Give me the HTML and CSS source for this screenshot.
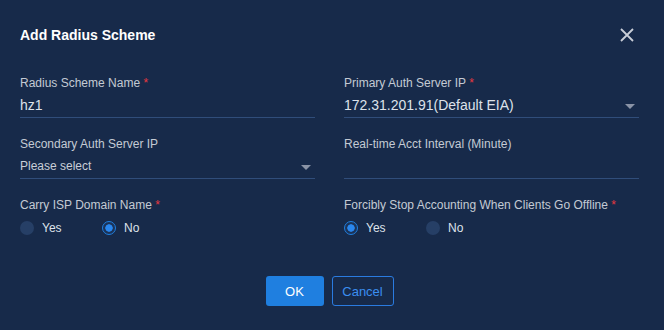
FILE: index.html
```html
<!DOCTYPE html>
<html lang="en">
<head>
    <meta charset="UTF-8">
    <meta name="viewport" content="width=device-width, initial-scale=1.0">
    <title>Add Radius Scheme</title>
    <link rel="stylesheet" href="styles.css">
</head>
<body>
    <div class="dialog">
        <div class="watermark" aria-hidden="true">
            <div class="wm-col wm-left">
                <div class="wm-block"><span>z11470</span><span>H3C</span></div>
                <div class="wm-block"><span>z11470</span><span>H3C</span></div>
                <div class="wm-block"><span>z11470</span><span>H3C</span></div>
                <div class="wm-block"><span>z11470</span><span>H3C</span></div>
                <div class="wm-block"><span>z11470</span><span>H3C</span></div>
                <div class="wm-block"><span>z11470</span><span>H3C</span></div>
            </div>
            <div class="wm-col wm-right">
                <div class="wm-block"><span>z11470</span><span>H3C</span></div>
                <div class="wm-block"><span>z11470</span><span>H3C</span></div>
                <div class="wm-block"><span>z11470</span><span>H3C</span></div>
                <div class="wm-block"><span>z11470</span><span>H3C</span></div>
                <div class="wm-block"><span>z11470</span><span>H3C</span></div>
                <div class="wm-block"><span>z11470</span><span>H3C</span></div>
            </div>
        </div>

        <div class="dialog-header">
            <h2>Add Radius Scheme</h2>
            <button type="button" class="close-btn" aria-label="Close">
                <svg width="14" height="14" viewBox="0 0 14 14">
                    <path d="M1 1 L13 13 M13 1 L1 13" stroke="#c9ced8" stroke-width="1.8" fill="none"/>
                </svg>
            </button>
        </div>

        <form class="scheme-form">
            <div class="form-grid">
                <div class="field">
                    <label>Radius Scheme Name <span class="req">*</span></label>
                    <div class="control">hz1</div>
                </div>
                <div class="field">
                    <label>Primary Auth Server IP <span class="req">*</span></label>
                    <div class="control select">172.31.201.91(Default EIA)<span class="caret"></span></div>
                </div>
                <div class="field">
                    <label>Secondary Auth Server IP</label>
                    <div class="control select placeholder">Please select<span class="caret"></span></div>
                </div>
                <div class="field">
                    <label>Real-time Acct Interval (Minute)</label>
                    <div class="control"></div>
                </div>
                <div class="field">
                    <label>Carry ISP Domain Name <span class="req">*</span></label>
                    <div class="radio-group">
                        <label class="radio"><input type="radio" name="isp"><span>Yes</span></label>
                        <label class="radio"><input type="radio" name="isp" checked><span>No</span></label>
                    </div>
                </div>
                <div class="field">
                    <label>Forcibly Stop Accounting When Clients Go Offline <span class="req">*</span></label>
                    <div class="radio-group">
                        <label class="radio"><input type="radio" name="stop" checked><span>Yes</span></label>
                        <label class="radio"><input type="radio" name="stop"><span>No</span></label>
                    </div>
                </div>
            </div>

            <div class="form-actions">
                <button type="submit" class="btn btn-primary">OK</button>
                <button type="button" class="btn btn-outline">Cancel</button>
            </div>
        </form>
    </div>
</body>
</html>
```

FILE: styles.css
```css
:root {
    --bg-color: #172a4a;
    --label-color: #c4cad4;
    --text-color: #dde2ea;
    --line-color: #304d7a;
    --blue: #1f7fe0;
    --required: #e8383f;
}

body {
    font-family: "Liberation Sans", Arial, sans-serif;
    margin: 0;
    padding: 0;
    background-color: var(--bg-color);
    min-height: 100vh;
}

.dialog {
    position: relative;
    padding: 25px 25px 0 20px;
    overflow: hidden;
    height: 330px;
    box-sizing: border-box;
}

/* faint user watermark behind the form */
.watermark {
    position: absolute;
    inset: 0;
    pointer-events: none;
}

.wm-col {
    position: absolute;
    top: -31px;
    display: flex;
    flex-direction: column;
}

.wm-left { left: 79px; }
.wm-right { left: 420px; }

.wm-block {
    display: flex;
    flex-direction: column;
    height: 62.5px;
    font-size: 18px;
    line-height: 21px;
    color: rgba(255, 255, 255, 0.018);
}

.dialog-header {
    position: relative;
    display: flex;
    align-items: center;
    justify-content: space-between;
    height: 20px;
    margin-bottom: 30px;
}

.dialog-header h2 {
    margin: 0;
    font-size: 14px;
    line-height: 20px;
    font-weight: bold;
    color: #fff;
}

.close-btn {
    background: none;
    border: none;
    padding: 0;
    margin-right: 5px;
    width: 14px;
    height: 14px;
    display: flex;
    cursor: pointer;
}

.scheme-form {
    position: relative;
}

.form-grid {
    display: grid;
    grid-template-columns: 295px 295px;
    column-gap: 29px;
    row-gap: 18px;
}

.field > label {
    display: block;
    font-size: 12px;
    line-height: 16px;
    color: var(--label-color);
    margin-bottom: 2px;
}

.req {
    color: var(--required);
}

.control {
    display: flex;
    align-items: center;
    justify-content: space-between;
    height: 24px;
    border-bottom: 1px solid var(--line-color);
    font-size: 14px;
    color: var(--text-color);
}

.control.placeholder {
    font-size: 12px;
    color: #c9ced8;
}

.caret {
    width: 0;
    height: 0;
    border-left: 5px solid transparent;
    border-right: 5px solid transparent;
    border-top: 5px solid #8a93a6;
    margin-right: 4px;
    margin-top: 2px;
}

.radio-group {
    display: flex;
    height: 20px;
    margin-top: 5px;
    align-items: center;
}

.radio {
    display: flex;
    align-items: center;
    width: 82px;
    font-size: 12px;
    color: var(--text-color);
    cursor: pointer;
}

.radio input {
    appearance: none;
    -webkit-appearance: none;
    margin: 0 8px 0 0;
    width: 14px;
    height: 14px;
    border-radius: 50%;
    background: #263f66;
    box-sizing: border-box;
}

.radio input:checked {
    border: 1.5px solid var(--blue);
    background: radial-gradient(circle, #2a87ee 3.4px, #1b3358 4px);
}

.form-actions {
    display: flex;
    justify-content: center;
    gap: 8px;
    margin-top: 38px;
}

.btn {
    height: 30px;
    border-radius: 3px;
    font-family: inherit;
    font-size: 13px;
    cursor: pointer;
    box-sizing: border-box;
}

.btn-primary {
    width: 58px;
    background-color: var(--blue);
    border: none;
    color: #fff;
}

.btn-outline {
    width: 62px;
    background: transparent;
    border: 1px solid #2a7be0;
    color: #3b8ef0;
}
```
